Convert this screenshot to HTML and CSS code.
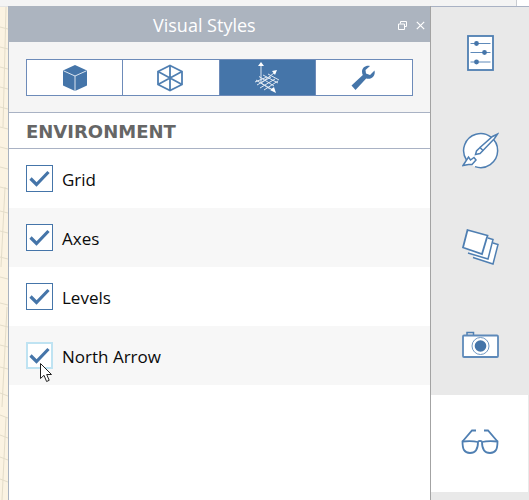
FILE: index.html
```html
<!DOCTYPE html>
<html>
<head>
    <meta charset="UTF-8">
    <title>Visual Styles</title>
    <link rel="stylesheet" href="styles.css">
</head>
<body>
<div class="topstrip"></div>
<div class="main">
    <div class="canvas">
        <svg width="8" height="493" viewBox="0 0 8 493">
            <g stroke="#e3dcc9" stroke-width="1" fill="none">
                <path d="M0 20L8 22M0 40L8 42M0 60L8 62M0 80L8 82M0 100L8 102M0 120L8 122M0 140L8 142M0 160L8 162M0 180L8 182M0 204L8 206M0 224L8 226M0 250L8 252M0 270L8 272M0 296L8 298M0 318L8 320M0 338L8 340M0 360L8 362M0 386L8 389M0 408L8 411M0 428L8 431M0 450L8 453M0 472L8 475"/>
                <path d="M6 0L3 120M5 180L1 260M7 300L2 400M6 410L2 493"/>
            </g>
        </svg>
    </div>
    <div class="panel">
        <div class="titlebar">
            <span class="title">Visual Styles</span>
            <svg class="winbtn restore" width="9" height="9" viewBox="0 0 9 9">
                <path d="M2.5 2.5V.5H8.5V5.5H6.5M.5 3H6.5V8.5H.5Z" fill="none" stroke="#fff"/>
            </svg>
            <svg class="winbtn" width="9" height="9" viewBox="0 0 9 9">
                <path d="M.8.8L8.2 8.2M8.2.8L.8 8.2" fill="none" stroke="#fff" stroke-width="1.2"/>
            </svg>
        </div>
        <div class="tabarea">
            <div class="tabs">
                <div class="tab">
                    <svg width="26" height="28" viewBox="0 0 26 28">
                        <path d="M13 1L25 6.5V21.500L13 27L1 21.500V6.500Z" fill="#4575a9"/>
                        <path d="M1.500 6.800L13 12L24.500 6.800M13 12V27" fill="none" stroke="#dbe5f0" stroke-width="1"/>
                    </svg>
                </div>
                <div class="tab second">
                    <svg width="28" height="28" viewBox="0 0 28 28">
                        <path d="M14 1.500L26 7.500V20.500L14 26.500L2 20.500V7.500ZM14 1.500V26.500M2 7.500L26 20.500M26 7.500L2 20.500" fill="none" stroke="#4f7fb2" stroke-width="1.800"/>
                    </svg>
                </div>
                <div class="tab active">
                    <svg width="28" height="32" viewBox="0 0 28 32">
                        <g fill="none" stroke="#dfe8f2" stroke-width="1">
                            <path d="M7 2V21M7 21L19 28M7 21L20 11"/>
                            <path d="M1 20L13 15M3 23L17 15M6 26L21 17M10 28L24 19M5 14.500L20 24M2 18L16 27M9 13L24 21M14 12L25 18"/>
                        </g>
                        <path d="M7 0L4 4H10ZM23 8L18 9L21 13ZM22 31L16 28L20 25Z" fill="#fff"/>
                    </svg>
                </div>
                <div class="tab">
                    <svg width="26" height="26" viewBox="0 0 26 26">
                        <path d="M24.500 5.500L20 10L16 8.500L15.500 5L20 1C16 0 12 2.500 12 6.500C12 8 12.300 9.200 12.800 10L1.500 20.500L5.500 25L16.200 13.500C21 15 26 11 24.500 5.500Z" fill="#4575a9"/>
                    </svg>
                </div>
            </div>
        </div>
        <div class="section">ENVIRONMENT</div>
        <ul class="list">
            <li class="row">
                <span class="check"><svg width="21" height="17" viewBox="0 0 21 17"><path d="M1.500 8.500L7.500 14.500L19.500 2" fill="none" stroke="#4575a9" stroke-width="3.200"/></svg></span>
                <span class="label">Grid</span>
            </li>
            <li class="row alt">
                <span class="check"><svg width="21" height="17" viewBox="0 0 21 17"><path d="M1.500 8.500L7.500 14.500L19.500 2" fill="none" stroke="#4575a9" stroke-width="3.200"/></svg></span>
                <span class="label">Axes</span>
            </li>
            <li class="row">
                <span class="check"><svg width="21" height="17" viewBox="0 0 21 17"><path d="M1.500 8.500L7.500 14.500L19.500 2" fill="none" stroke="#4575a9" stroke-width="3.200"/></svg></span>
                <span class="label">Levels</span>
            </li>
            <li class="row alt">
                <span class="check hover"><svg width="21" height="17" viewBox="0 0 21 17"><path d="M1.500 8.500L7.500 14.500L19.500 2" fill="none" stroke="#4575a9" stroke-width="3.200"/></svg></span>
                <span class="label">North Arrow</span>
                <svg class="cursor" width="13" height="20" viewBox="0 0 13 20">
                    <path d="M.5.500V15.500L4 12.300L6.600 18.500L9.200 17.300L6.700 11.500H11.500Z" fill="#fff" stroke="#222" stroke-width="1"/>
                </svg>
            </li>
        </ul>
    </div>
    <div class="rail">
        <div class="railitem">
            <svg width="27" height="36" viewBox="0 0 27 36">
                <rect x="1" y="1" width="25" height="34" fill="#fff" stroke="#4f7fb2" stroke-width="1.800"/>
                <path d="M3.500 8.500H23.500M3.500 17.500H23.500M3.500 27H23.500" stroke="#5e8aba" stroke-width="1"/>
                <circle cx="9.500" cy="8.500" r="2.400" fill="#4575a9"/>
                <circle cx="17.500" cy="17.500" r="2.400" fill="#4575a9"/>
                <circle cx="9.500" cy="27" r="2.400" fill="#4575a9"/>
            </svg>
        </div>
        <div class="railitem">
            <svg width="37" height="37" viewBox="0 0 37 37">
                <circle cx="18.500" cy="18.500" r="17" fill="#fff"/>
                <path d="M4.500 28A17 17 0 1 1 13 34.600" fill="none" stroke="#4f7fb2" stroke-width="1.500"/>
                <path d="M35.500 2L32.500 6.500L21 18.500L18 15.500L30.500 4.500ZM18 15.500L21 18.500L18 21.500L13.500 22.500L14.500 19Z" fill="#fff" stroke="#4f7fb2" stroke-width="1.500"/>
                <path d="M1 33.500L6.500 25L8.500 28L12 25.500L14 28L10 32.500L6.500 32.500Z" fill="#fff" stroke="#4f7fb2" stroke-width="1.500"/>
            </svg>
        </div>
        <div class="railitem">
            <svg width="37" height="36" viewBox="0 0 37 36">
                <path d="M11 28.500L31 35L36 15.500L31 14M6 24L26 30L31 10.500L26 9" fill="#fff" stroke="#4f7fb2" stroke-width="1.500"/>
                <path d="M5.500 1L25.500 6.500L20 25L1 18.500Z" fill="#fff" stroke="#4f7fb2" stroke-width="1.800"/>
            </svg>
        </div>
        <div class="railitem">
            <svg width="37" height="27" viewBox="0 0 37 27">
                <path d="M5 4V1.500H11.500V4" fill="none" stroke="#4f7fb2" stroke-width="1.500"/>
                <rect x="1" y="4.500" width="35" height="21.500" rx="1" fill="#fff" stroke="#5e8aba" stroke-width="1.800"/>
                <circle cx="18.500" cy="15" r="8.500" fill="#fff" stroke="#6f97c2" stroke-width="1"/>
                <circle cx="18.500" cy="15" r="5.800" fill="#4575a9"/>
            </svg>
        </div>
        <div class="railitem on">
            <svg width="38" height="25" viewBox="0 0 38 25">
                <g fill="none" stroke="#4f7fb2" stroke-width="1.800">
                    <path d="M1.500 12.500C1.500 20 3 24 9 24C15 24 17 19 17 13C13 12 6 12 1.500 12.500Z"/>
                    <path d="M36.500 12.500C36.500 20 35 24 29 24C23 24 21 19 21 13C25 12 32 12 36.500 12.500Z"/>
                    <path d="M17 12.500C18.500 11.500 19.500 11.500 21 12.500M1.500 12.500L11 1.500H15M36.500 12.500L27 1.500H23"/>
                </g>
            </svg>
        </div>
        <div class="railrest"></div>
    </div>
</div>
</body>
</html>
```

FILE: styles.css
```css
*{
    margin: 0;
    padding: 0;
    box-sizing: border-box;
}
ul,ol{
    list-style: none;
}
html,body{
    width: 529px;
    height: 500px;
    overflow: hidden;
}
body{
    background: #fff;
    font-family: "Open Sans", "Noto Sans", sans-serif;
    color: #0a0a0a;
}
.topstrip{
    width: 517px;
    height: 6px;
    background: #f4f4f4;
    border-right: 1px solid #c9ccd2;
}
.main{
    display: flex;
    height: 494px;
}
.canvas{
    width: 8px;
    background: #fbf3e2;
    border-top: 1px solid #e4e4e4;
}
.canvas svg{
    display: block;
}
.panel{
    width: 423px;
    background: #fff;
    border-left: 1px solid #a9b2bf;
    border-right: 1px solid #a3a3a3;
}
.titlebar{
    height: 36px;
    background: #acb4bf;
    display: flex;
    align-items: center;
    justify-content: flex-end;
    position: relative;
    padding: 2px 5px 0 0;
    gap: 9px;
}
.title{
    position: absolute;
    left: 144px;
    top: 6px;
    color: #fff;
    font-size: 18px;
    line-height: 26px;
}
.tabarea{
    height: 71px;
    background: #f5f5f5;
    border-bottom: 1px solid #a9b2c4;
    padding: 17px 0 0 17px;
}
.tabs{
    display: flex;
    width: 387px;
    height: 37px;
    background: #fff;
    border: 1px solid #6d8bb9;
}
.tab{
    flex: 0 0 96px;
    display: flex;
    align-items: center;
    justify-content: center;
    border-right: 1px solid #6d8bb9;
}
.tab.second{
    flex-basis: 97px;
    padding-right: 2px;
}
.tab:last-child{
    border-right: 0;
    flex: 1;
    padding-right: 2px;
}
.tab.active{
    background: #4575a9;
}
.section{
    height: 36px;
    border-bottom: 1px solid #a9b2c4;
    padding: 1px 0 0 17px;
    font-size: 18px;
    line-height: 35px;
    font-weight: bold;
    color: #666;
    font-family: "DejaVu Sans", sans-serif;
}
.row{
    height: 59px;
    display: flex;
    align-items: center;
    padding-left: 17px;
    font-size: 17px;
    position: relative;
}
.row.alt{
    background: #f7f7f7;
}
.label{
    margin-top: 2px;
}
.check{
    width: 27px;
    height: 27px;
    margin-right: 9px;
    background: #fff;
    border: 1px solid #4575a9;
    display: flex;
    align-items: center;
    justify-content: center;
}
.check.hover{
    border: 2px solid #bfe3f2;
}
.cursor{
    position: absolute;
    left: 31px;
    top: 37px;
}
.rail{
    width: 98px;
    background: #e9e9e9;
    border-top: 1px solid #a9b2c4;
    display: flex;
    flex-direction: column;
}
.railitem{
    height: 97px;
    display: flex;
    align-items: center;
    justify-content: center;
    padding-bottom: 5px;
}
.railitem.on{
    background: #fff;
    margin-right: 1px;
}
```
